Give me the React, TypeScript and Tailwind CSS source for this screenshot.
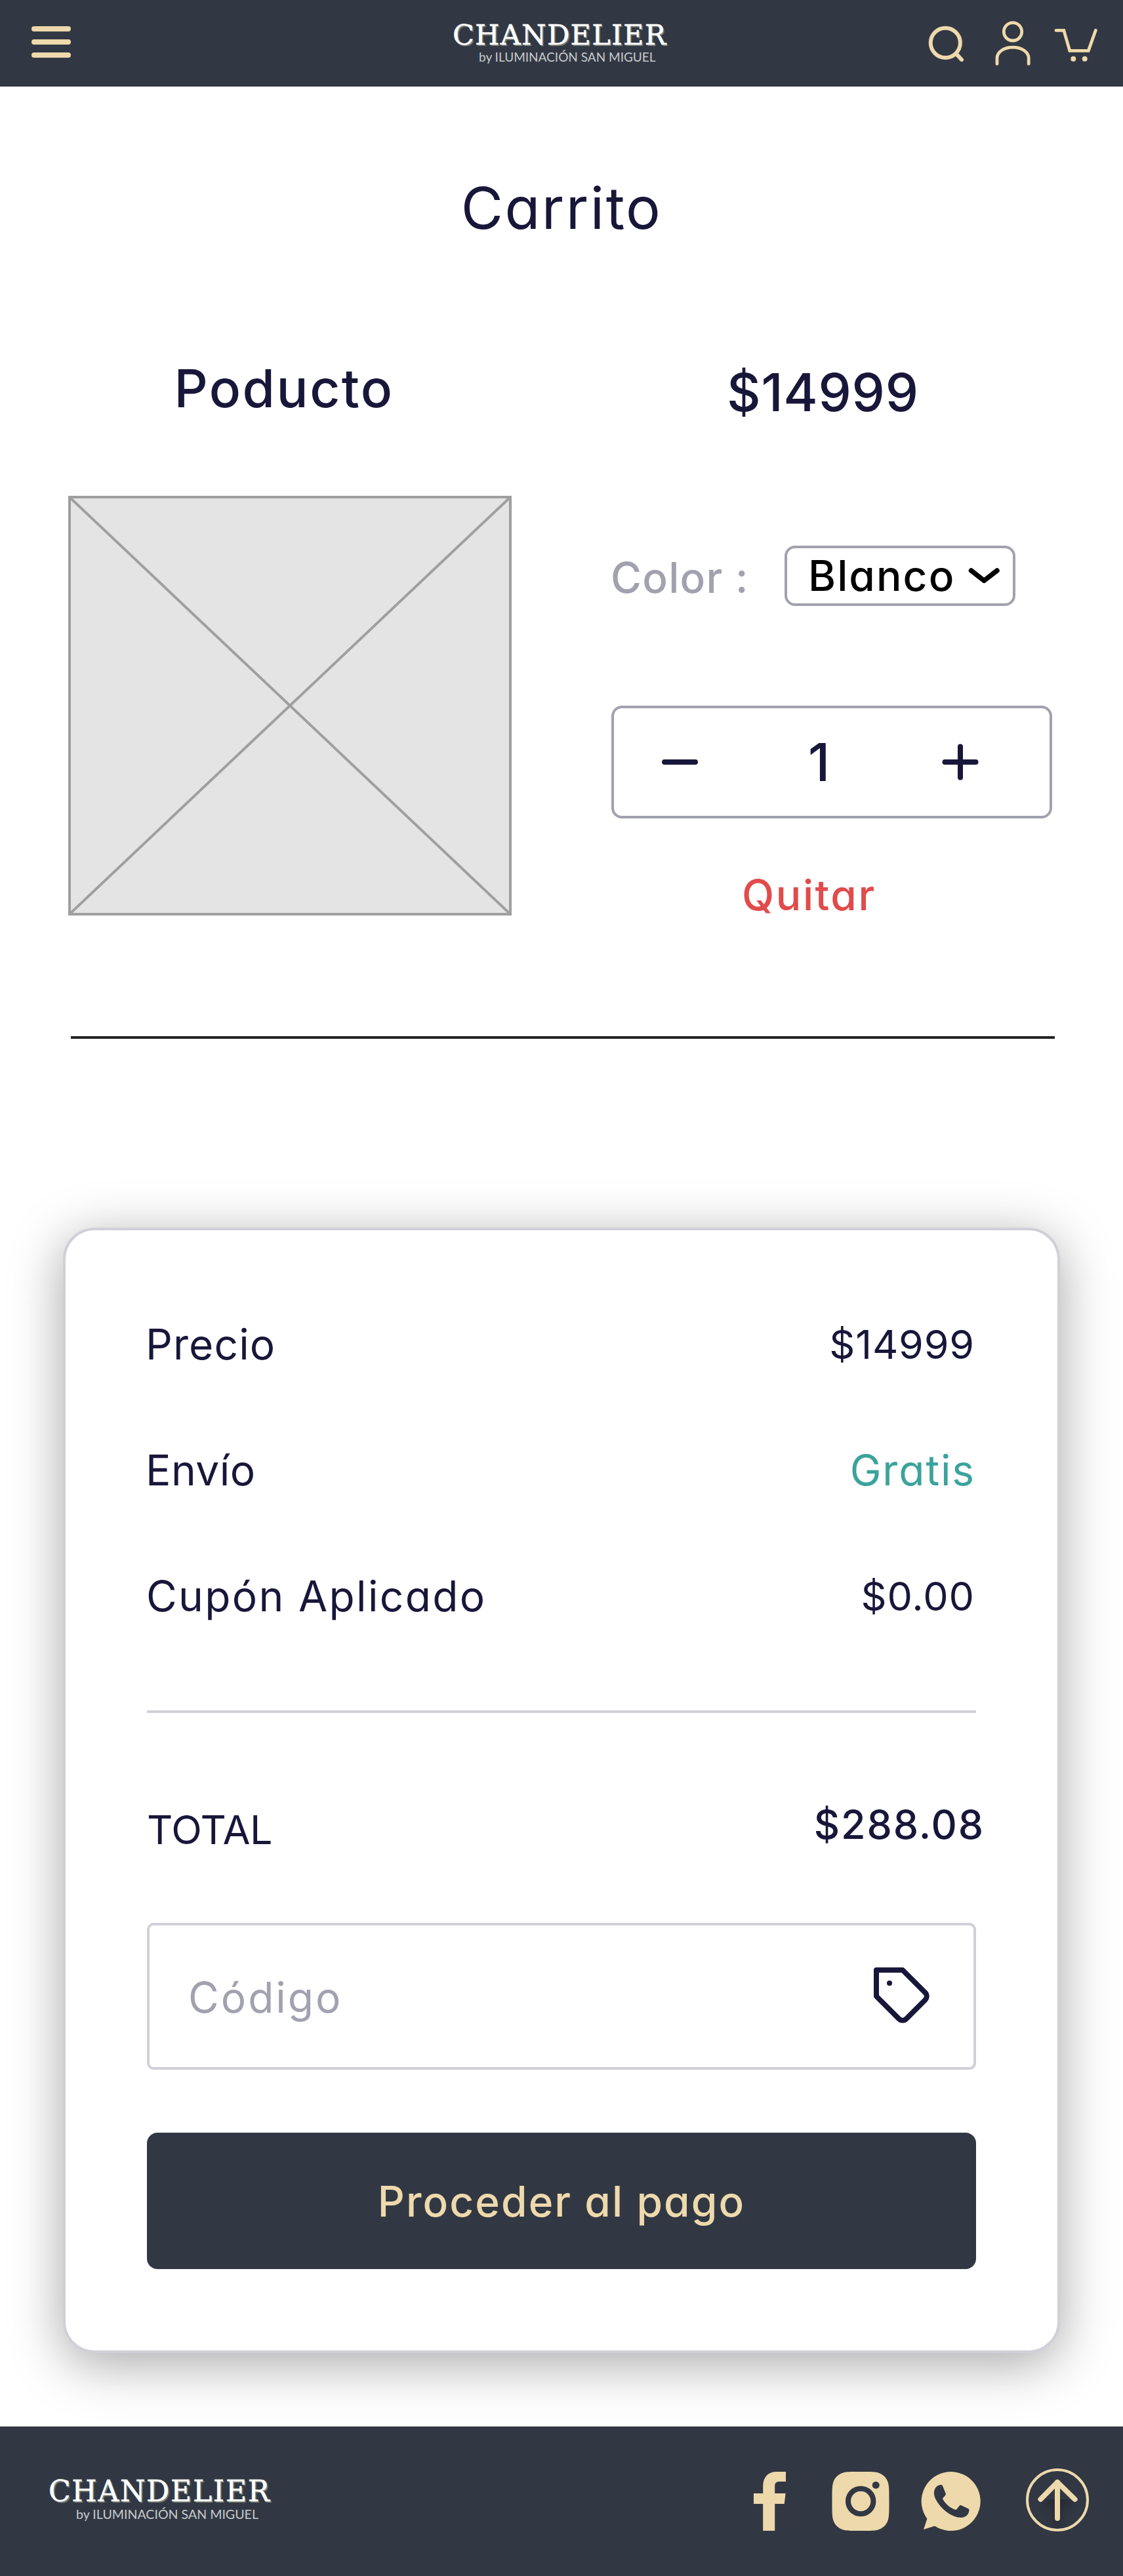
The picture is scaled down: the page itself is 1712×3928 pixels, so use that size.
import type { ReactNode } from "react";

const GOLD = "#eed9ac";

function HeaderIcons() {
  return (
    <div className="flex items-start" aria-label="Acciones">
      <svg className="mt-[36px] h-[60px] w-[60px]" viewBox="1412 36 60 60" fill="none" stroke={GOLD} strokeWidth="6" strokeLinecap="round">
        <circle cx="1441.3" cy="65.3" r="22.6" />
        <path d="M1458 82.4L1466 91" />
      </svg>
      <svg className="ml-[40px] mt-[28px] h-[76px] w-[64px]" viewBox="1512 28 64 76" fill="none" stroke={GOLD} strokeWidth="4.8" strokeLinecap="round">
        <circle cx="1544" cy="48.3" r="13.7" />
        <path d="M1520 97.4V88.5C1520 80 1529.5 72.1 1544 72.1S1568.2 80 1568.2 88.5V97.4" />
      </svg>
      <svg className="ml-[28px] mt-[36px] h-[64px] w-[72px]" viewBox="1604 36 72 64" fill="none">
        <path d="M1610 46.4H1621.8L1630.8 77.4H1659.3L1670.3 46.2" stroke={GOLD} strokeWidth="4.8" strokeLinecap="round" />
        <circle cx="1636.3" cy="89.7" r="4" fill={GOLD} />
        <circle cx="1653.7" cy="89.7" r="4" fill={GOLD} />
      </svg>
    </div>
  );
}

function SocialIcons() {
  return (
    <div className="flex items-start pt-[60px]">
      <svg className="mt-[9px] h-[90px] w-[50px]" viewBox="1149 3769 50 90" fill={GOLD}>
        <path d="M1163.2 3859V3818H1149V3802H1163.2V3791C1163.2 3777 1171 3769 1184 3769H1198V3784H1188C1183 3784 1181.2 3787 1181.2 3791V3802H1197.6L1195.7 3818H1181.2V3859Z" />
      </svg>
      <svg className="ml-[69px] mt-[9px] h-[90px] w-[88px]" viewBox="1268 3769 88 90">
        <path
          fill={GOLD}
          d="M1312 3769C1330 3769 1335 3769 1340 3771C1347 3773.500 1352 3779 1354 3786C1355.500 3792 1355.500 3798 1355.500 3814S1355.500 3836 1354 3842C1352 3849 1347 3854.500 1340 3857C1335 3859 1330 3859 1312 3859S1289 3859 1284 3857C1277 3854.500 1272 3849 1270 3842C1268.500 3836 1268.500 3830 1268.500 3814S1268.500 3792 1270 3786C1272 3779 1277 3773.500 1284 3771C1289 3769 1294 3769 1312 3769Z"
        />
        <circle cx="1312.2" cy="3814" r="19.2" fill="none" stroke="#323843" strokeWidth="8" />
        <circle cx="1335.2" cy="3789.4" r="5.5" fill="#323843" />
      </svg>
      <svg className="ml-[48px] mt-[9px] h-[90px] w-[92px]" viewBox="1404 3769 92 90">
        <path fill={GOLD} d="M1408 3857L1413.400 3840.700A45 45 0 1 1 1425 3851.700Z" />
        <path
          fill="#323843"
          d="M1432.500 3789.200C1435.500 3788.700 1436.300 3789 1437 3790.600L1441.800 3802.600C1442.200 3804 1441 3805.500 1437.800 3808.800C1437.200 3809.600 1437 3810.200 1437.500 3811.200C1442 3818.500 1447.500 3823.500 1456 3826.800C1457.200 3827.200 1457.900 3826.900 1458.600 3826.100L1462.800 3820.800C1463.600 3819.800 1464.300 3819.800 1465.400 3820.300L1476.400 3825.500C1477.400 3826 1477.500 3826.600 1477.400 3828.200C1477 3834.500 1471.500 3839 1465 3839C1459 3839 1450 3836 1442 3829.500C1435.500 3824.500 1426.500 3814 1424.500 3806C1422.500 3798 1426 3790.300 1432.500 3789.200Z"
        />
      </svg>
      <svg className="ml-[68px] mt-[4px] h-[96px] w-[96px]" viewBox="1564 3764 96 96" fill="none">
        <defs>
          <filter id="soft" x="-50%" y="-50%" width="200%" height="200%">
            <feGaussianBlur stdDeviation="7" />
          </filter>
          <clipPath id="lower">
            <rect x="1568" y="3811" width="88" height="46" />
          </clipPath>
        </defs>
        <g clipPath="url(#lower)">
          <path d="M1592 3822L1612 3801L1632 3822M1612 3801V3856" stroke="#000" strokeOpacity="0.3" strokeWidth="10" filter="url(#soft)" />
        </g>
        <circle cx="1612" cy="3812" r="46" stroke={GOLD} strokeWidth="4" />
        <path d="M1586.400 3811L1612 3785L1638.600 3811M1612 3785V3840" stroke={GOLD} strokeWidth="8" strokeLinecap="round" strokeLinejoin="round" />
      </svg>
    </div>
  );
}

function Row({ label, labelClass, children }: { label: string; labelClass: string; children: ReactNode }) {
  return (
    <div className="flex h-[80px] items-center justify-between text-[61px] leading-[80px]">
      <span className={labelClass}>{label}</span>
      {children}
    </div>
  );
}

export default function App() {
  return (
    <div className="flex w-[1712px] flex-col bg-white font-['Inter',sans-serif] text-[#18173a] [font-feature-settings:'cv11'] whitespace-nowrap">
      <header className="flex h-[132px] items-start justify-between bg-[#323843] pl-[48px] pr-[36px]">
        <button className="mt-[40px] flex w-[60px] flex-col gap-[12px]" aria-label="Menú">
          <span className="h-[8px] rounded-full bg-[#eed9ac]" />
          <span className="h-[8px] rounded-full bg-[#eed9ac]" />
          <span className="h-[8px] rounded-full bg-[#eed9ac]" />
        </button>
        <div className="ml-[190px] w-[330px] pt-[33px]">
          <div className="h-[40px] font-['DejaVu_Serif',serif] text-[43px] leading-[40px] tracking-[1.2px] text-white [-webkit-text-stroke:0.5px_white] [text-shadow:2px_2px_1px_#7b8078]">
            CHANDELIER
          </div>
          <div className="h-[28px] pl-[40px] font-['Lato',sans-serif] text-[19px] leading-[28px] text-[#c8cacd]">
            by ILUMINACIÓN SAN MIGUEL
          </div>
        </div>
        <HeaderIcons />
      </header>

      <main className="flex flex-col">
        <h1 className="mt-[135px] h-[100px] text-center text-[88px] leading-[100px] tracking-[2.500px]">Carrito</h1>

        <section className="mt-[185px] flex items-start pl-[104px]">
          <div className="w-[676px]">
            <h2 className="h-[80px] pr-[18px] text-center text-[80px] font-medium leading-[80px] tracking-[2.500px]">Poducto</h2>
            <div className="mt-[124px] h-[640px] border-4 border-[#9f9f9f] bg-[#e4e4e4]">
              <svg className="h-full w-full" viewBox="0 0 668 632" preserveAspectRatio="none" stroke="#9f9f9f" strokeWidth="4">
                <path d="M0 0L668 632M668 0L0 632" />
              </svg>
            </div>
          </div>

          <div className="ml-[152px] w-[672px] pt-[6px]">
            <div className="h-[80px] pl-[176px] text-[80px] font-medium leading-[80px] tracking-[0.700px]">$14999</div>
            <div className="mt-[194px] flex h-[92px] items-center">
              <span className="-ml-px w-[265px] pt-[6px] text-[64px] font-medium leading-[80px] tracking-[1.300px] text-[#a1a1af]">Color :</span>
              <div className="flex h-[92px] w-[352px] items-center rounded-[16px] border-4 border-[#a1a1af] pl-[32px] pr-[16px] text-black">
                <span className="text-[64px] font-medium leading-[80px] tracking-[2.100px]">Blanco</span>
                <svg className="ml-auto h-[36px] w-[56px] shrink-0" viewBox="0 0 56 36" fill="none" stroke="currentColor" strokeWidth="7.500" strokeLinecap="round" strokeLinejoin="round">
                  <path d="M8.500 10L28.200 25.400L48 10" />
                </svg>
              </div>
            </div>
            <div className="mt-[152px] flex h-[172px] items-center rounded-[16px] border-4 border-[#a1a1af]">
              <button className="ml-[73px] h-[8px] w-[55px] rounded-full bg-[#18173a]" aria-label="Menos" />
              <span className="ml-[168px] w-[60px] text-[80px] font-medium leading-[80px]">1</span>
              <svg className="ml-[144px] h-[56px] w-[56px]" viewBox="0 0 56 56" stroke="currentColor" strokeWidth="8" strokeLinecap="round">
                <path d="M4.500 28H51.500M28 4.500V51.500" />
              </svg>
            </div>
            <div className="mt-[77px] h-[81px] pl-[199px] text-[64px] font-medium leading-[80px] tracking-[2.600px] text-[#e14b4b]">Quitar</div>
          </div>
        </section>

        <hr className="ml-[108px] mt-[174px] h-[4px] w-[1500px] border-0 bg-[#232326]" />

        <section className="mx-[96px] mt-[288px] flex h-[1716px] flex-col rounded-[48px] border-4 border-[#d0d0d8] bg-white px-[124px] pt-[134px] shadow-[0_16px_80px_rgba(0,0,0,0.35)]">
          <div className="flex flex-col gap-[112px]">
            <Row label="Precio" labelClass="-ml-[2px] text-[64px] tracking-[1.100px]">
              <span className="mr-[2px] tracking-[0.800px]">$14999</span>
            </Row>
            <Row label="Envío" labelClass="-ml-[2px] text-[64px] tracking-[0.500px]">
              <span className="mr-[1px] text-[64px] tracking-[1.850px] text-[#3ba39c]">Gratis</span>
            </Row>
            <Row label="Cupón Aplicado" labelClass="-ml-[1px] text-[64px] tracking-[2.350px]">
              <span className="mr-[2px] tracking-[0.900px]">$0.00</span>
            </Row>
          </div>
          <hr className="mt-[134px] h-[4px] border-0 bg-[#d0d0d8]" />
          <div className="mt-[138px]">
            <Row label="TOTAL" labelClass="tracking-[-0.400px]">
              <span className="-mr-[13px] pb-[16px] font-medium tracking-[1.900px]">$288.08</span>
            </Row>
          </div>
          <div className="mt-[102px] flex h-[224px] items-center justify-between rounded-[10px] border-4 border-[#d0d0d8] pl-[59px] pr-[60px]">
            <span className="pt-[3px] text-[64px] leading-[80px] tracking-[3px] text-[#a1a1af]">Código</span>
            <svg className="h-[96px] w-[96px]" viewBox="0 0 24 24" fill="none" stroke="currentColor" strokeWidth="2" strokeLinecap="round" strokeLinejoin="round">
              <path d="M20.590 13.410l-7.170 7.170a2 2 0 0 1-2.830 0L2 12V2h10l8.590 8.590a2 2 0 0 1 0 2.820z" />
              <path d="M7 7h.01" />
            </svg>
          </div>
          <button className="mt-[96px] h-[208px] shrink-0 rounded-[16px] bg-[#323843] pt-[2px] text-center text-[64px] font-medium tracking-[2.100px] text-[#eed9ac]">
            Proceder al pago
          </button>
        </section>
      </main>

      <footer className="mt-[112px] flex h-[228px] items-start justify-between bg-[#323843] pl-[74px] pr-[52px]">
        <div className="pt-[79px]">
          <div className="h-[41px] font-['DejaVu_Serif',serif] text-[44px] leading-[40px] tracking-[1.700px] text-white [-webkit-text-stroke:0.5px_white] [text-shadow:2px_2px_1px_#7b8078]">
            CHANDELIER
          </div>
          <div className="h-[28px] pl-[42px] font-['Lato',sans-serif] text-[19.600px] leading-[28px] text-[#c8cacd]">
            by ILUMINACIÓN SAN MIGUEL
          </div>
        </div>
        <SocialIcons />
      </footer>
    </div>
  );
}
